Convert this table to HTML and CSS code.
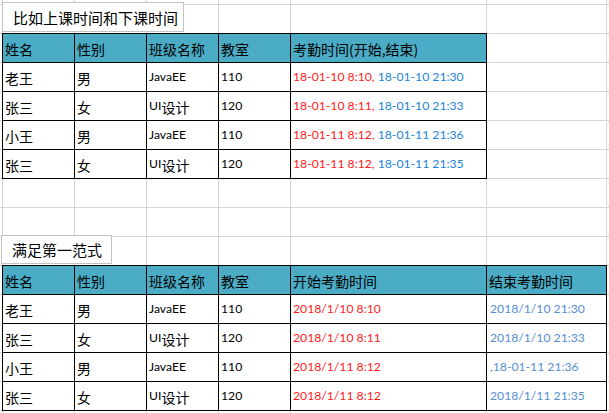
FILE: index.html
```html
<!DOCTYPE html>
<html lang="zh-CN">
<head>
<meta charset="utf-8">
<title>考勤时间</title>
<link rel="stylesheet" href="styles.css">
</head>
<body>
<div class="sheet">
  <div class="tb tb1">比如上课时间和下课时间</div>
  <div class="tb tb2">满足第一范式</div>

  <div class="tbl tbl1">
    <div class="td th">姓名</div><div class="td th">性别</div><div class="td th">班级名称</div><div class="td th">教室</div><div class="td th">考勤时间(开始,结束)</div>
    <div class="td">老王</div><div class="td">男</div><div class="td"><span class="lat">JavaEE</span></div><div class="td"><span class="lat">110</span></div><div class="td"><span class="lat"><span class="red">18-01-10 8:10,</span> <span class="blue">18-01-10 21:30</span></span></div>
    <div class="td">张三</div><div class="td">女</div><div class="td"><span class="lat">UI</span>设计</div><div class="td"><span class="lat">120</span></div><div class="td"><span class="lat"><span class="red">18-01-10 8:11,</span> <span class="blue">18-01-10 21:33</span></span></div>
    <div class="td">小王</div><div class="td">男</div><div class="td"><span class="lat">JavaEE</span></div><div class="td"><span class="lat">110</span></div><div class="td"><span class="lat"><span class="red">18-01-11 8:12,</span> <span class="blue">18-01-11 21:36</span></span></div>
    <div class="td">张三</div><div class="td">女</div><div class="td"><span class="lat">UI</span>设计</div><div class="td"><span class="lat">120</span></div><div class="td"><span class="lat"><span class="red">18-01-11 8:12,</span> <span class="blue">18-01-11 21:35</span></span></div>
  </div>

  <div class="tbl tbl2">
    <div class="td th">姓名</div><div class="td th">性别</div><div class="td th">班级名称</div><div class="td th">教室</div><div class="td th">开始考勤时间</div><div class="td th">结束考勤时间</div>
    <div class="td">老王</div><div class="td">男</div><div class="td"><span class="lat">JavaEE</span></div><div class="td"><span class="lat">110</span></div><div class="td"><span class="lat red">2018/1/10 8:10</span></div><div class="td end"><span class="lat blue2">2018/1/10 21:30</span></div>
    <div class="td">张三</div><div class="td">女</div><div class="td"><span class="lat">UI</span>设计</div><div class="td"><span class="lat">120</span></div><div class="td"><span class="lat red">2018/1/10 8:11</span></div><div class="td end"><span class="lat blue2">2018/1/10 21:33</span></div>
    <div class="td">小王</div><div class="td">男</div><div class="td"><span class="lat">JavaEE</span></div><div class="td"><span class="lat">110</span></div><div class="td"><span class="lat red">2018/1/11 8:12</span></div><div class="td end"><span class="lat blue2">,18-01-11 21:36</span></div>
    <div class="td">张三</div><div class="td">女</div><div class="td"><span class="lat">UI</span>设计</div><div class="td"><span class="lat">120</span></div><div class="td"><span class="lat red">2018/1/11 8:12</span></div><div class="td end"><span class="lat blue2">2018/1/11 21:35</span></div>
  </div>

  <div class="c"></div><div class="c"></div><div class="c"></div><div class="c"></div><div class="c"></div><div class="c"></div><div class="c"></div><div class="c"></div>
  <div class="c"></div><div class="c"></div><div class="c"></div><div class="c"></div><div class="c"></div><div class="c"></div><div class="c"></div><div class="c"></div>
  <div class="c"></div><div class="c"></div><div class="c"></div><div class="c"></div><div class="c"></div><div class="c"></div><div class="c"></div><div class="c"></div>
  <div class="c"></div><div class="c"></div><div class="c"></div><div class="c"></div><div class="c"></div><div class="c"></div><div class="c"></div><div class="c"></div>
  <div class="c"></div><div class="c"></div><div class="c"></div><div class="c"></div><div class="c"></div><div class="c"></div><div class="c"></div><div class="c"></div>
  <div class="c"></div><div class="c"></div><div class="c"></div><div class="c"></div><div class="c"></div><div class="c"></div><div class="c"></div><div class="c"></div>
  <div class="c"></div><div class="c"></div><div class="c"></div><div class="c"></div><div class="c"></div><div class="c"></div><div class="c"></div><div class="c"></div>
  <div class="c"></div><div class="c"></div><div class="c"></div><div class="c"></div><div class="c"></div><div class="c"></div><div class="c"></div><div class="c"></div>
  <div class="c"></div><div class="c"></div><div class="c"></div><div class="c"></div><div class="c"></div><div class="c"></div><div class="c"></div><div class="c"></div>
  <div class="c"></div>
</div>
</body>
</html>
```

FILE: styles.css
```css
html, body {
  margin: 0;
  padding: 0;
  background: #ffffff;
  overflow: hidden;
}

body {
  font-family: "Noto Sans CJK SC", sans-serif;
  font-size: 14px;
  color: #000000;
}

.sheet {
  position: relative;
  display: grid;
  grid-template-columns: 3px 72px 72px 72px 72px 196px 120px 4px;
  grid-template-rows: 5px repeat(14, 29px) 5px;
  width: 609px;
  height: 413px;
  overflow: hidden;
}

.c {
  box-sizing: border-box;
  border-right: 1px solid #d4d4d4;
  border-bottom: 1px solid #d4d4d4;
}

.tbl {
  display: grid;
  grid-auto-rows: 29px;
  border-left: 1px solid #000000;
  border-top: 1px solid #000000;
  margin: -1px 0 0 -1px;
  background: #ffffff;
  z-index: 1;
}

.tbl1 {
  grid-column: 2 / 7;
  grid-row: 3 / 8;
  grid-template-columns: 72px 72px 72px 72px 196px;
}

.tbl2 {
  grid-column: 2 / 8;
  grid-row: 11 / 16;
  grid-template-columns: 72px 72px 72px 72px 196px 120px;
}

.td {
  box-sizing: border-box;
  display: flex;
  align-items: center;
  padding: 1px 0 0 2px;
  border-right: 1px solid #000000;
  border-bottom: 1px solid #000000;
  white-space: pre;
  overflow: hidden;
  font-size: 14px;
  line-height: 1;
}

.th {
  background: #4bacc6;
  padding-top: 2px;
}

.end {
  padding-left: 3px;
}

.lat {
  font-family: Lato, "Noto Sans CJK SC", sans-serif;
  font-size: 12.2px;
}

.red {
  color: #ff1a1a;
}

.blue {
  color: #1a84d8;
}

.blue2 {
  color: #558ed5;
}

.tb {
  position: absolute;
  box-sizing: border-box;
  display: flex;
  align-items: center;
  padding-left: 10px;
  background: #ffffff;
  border: 1px solid #c3c3c3;
  font-size: 15px;
  z-index: 2;
}

.tb1 {
  left: 2px;
  top: 2px;
  width: 182px;
  height: 30px;
}

.tb2 {
  left: 1px;
  top: 235px;
  width: 111px;
  height: 29px;
}
```
